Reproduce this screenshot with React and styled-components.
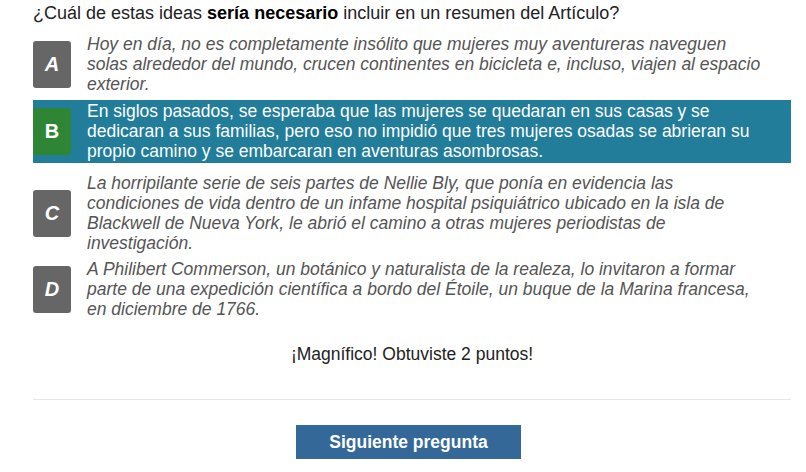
import React from "react";
import styled, { createGlobalStyle } from "styled-components";

const options = [
  {
    key: "A",
    text: "Hoy en día, no es completamente insólito que mujeres muy aventureras naveguen solas alrededor del mundo, crucen continentes en bicicleta e, incluso, viajen al espacio exterior.",
  },
  {
    key: "B",
    correct: true,
    text: "En siglos pasados, se esperaba que las mujeres se quedaran en sus casas y se dedicaran a sus familias, pero eso no impidió que tres mujeres osadas se abrieran su propio camino y se embarcaran en aventuras asombrosas.",
  },
  {
    key: "C",
    text: "La horripilante serie de seis partes de Nellie Bly, que ponía en evidencia las condiciones de vida dentro de un infame hospital psiquiátrico ubicado en la isla de Blackwell de Nueva York, le abrió el camino a otras mujeres periodistas de investigación.",
  },
  {
    key: "D",
    text: "A Philibert Commerson, un botánico y naturalista de la realeza, lo invitaron a formar parte de una expedición científica a bordo del Étoile, un buque de la Marina francesa, en diciembre de 1766.",
  },
];

function App() {
  return (
    <>
      <GlobalStyle />
      <Page>
        <Question>
          ¿Cuál de estas ideas <strong>sería necesario</strong> incluir en un resumen del Artículo?
        </Question>
        <OptionList>
          {options.map((opt) => (
            <Option key={opt.key} $correct={opt.correct}>
              <Badge $correct={opt.correct}>{opt.key}</Badge>
              <OptionText $correct={opt.correct}>{opt.text}</OptionText>
            </Option>
          ))}
        </OptionList>
        <Feedback>¡Magnífico! Obtuviste 2 puntos!</Feedback>
        <Divider />
        <ButtonRow>
          <NextButton>Siguiente pregunta</NextButton>
        </ButtonRow>
      </Page>
    </>
  );
}

export default App;

const GlobalStyle = createGlobalStyle`
  body {
    margin: 0;
    background: #fff;
    font-family: "Liberation Sans", Arial, sans-serif;
  }
`;

const Page = styled.div`
  width: 758px;
  padding: 3px 15px 0 33px;
`;

const Question = styled.div`
  font-size: 18px;
  line-height: 20px;
  color: #222;
  strong {
    font-weight: bold;
    color: #000;
  }
`;

const OptionList = styled.div`
  display: flex;
  flex-direction: column;
  gap: 6px;
  margin-top: 11px;
`;

const Option = styled.div`
  display: flex;
  align-items: center;
  gap: 16px;
  background: ${(p) => (p.$correct ? "#217d9a" : "transparent")};
  padding: ${(p) => (p.$correct ? "1px 0 2px" : "0")};
  margin-bottom: ${(p) => (p.$correct ? "4px" : "0")};
`;

const Badge = styled.div`
  flex: 0 0 38px;
  height: 47px;
  border-radius: 3px;
  display: flex;
  align-items: center;
  justify-content: center;
  background: ${(p) => (p.$correct ? "#2e8533" : "#666")};
  color: #fff;
  font-size: 20px;
  font-weight: bold;
  font-style: ${(p) => (p.$correct ? "normal" : "italic")};
`;

const OptionText = styled.div`
  flex: 1;
  font-size: 17.5px;
  line-height: 20px;
  padding-right: 28px;
  color: ${(p) => (p.$correct ? "#fff" : "#555")};
  font-style: ${(p) => (p.$correct ? "normal" : "italic")};
`;

const Feedback = styled.div`
  margin-top: 25px;
  text-align: center;
  font-size: 17.5px;
  line-height: 20px;
  color: #222;
`;

const Divider = styled.div`
  margin-top: 35px;
  border-top: 1px solid #e6e6e6;
`;

const ButtonRow = styled.div`
  display: flex;
  justify-content: center;
  margin-top: 25px;
  padding-right: 7px;
`;

const NextButton = styled.button`
  width: 225px;
  height: 34px;
  border: none;
  background: #346899;
  color: #fff;
  font-family: "Liberation Sans", Arial, sans-serif;
  font-size: 17.5px;
  font-weight: bold;
  cursor: pointer;
`;
